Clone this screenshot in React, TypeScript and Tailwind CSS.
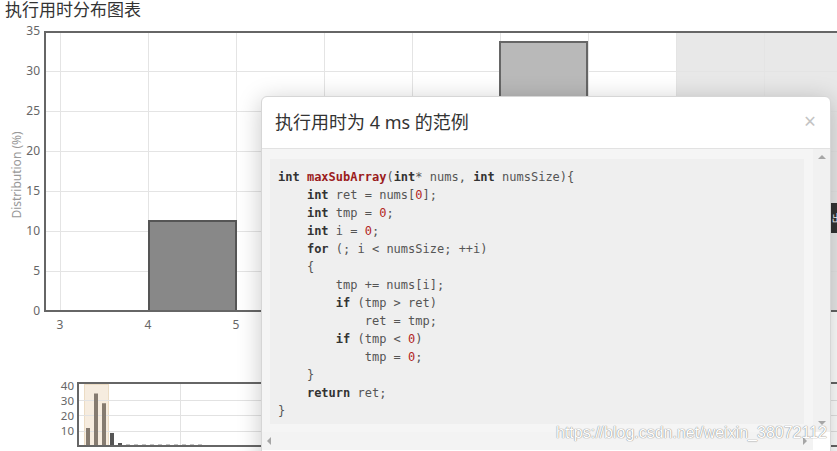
import React from "react";

// main chart geometry (page coords, svg is shifted up by the title height)
const yTicks = [0, 5, 10, 15, 20, 25, 30, 35];
const xGrid = [60, 148, 236, 324, 412, 500, 588, 676, 764];

const miniBars = [
  { x: 78, v: 0.6 },
  { x: 86, v: 12, sel: true },
  { x: 94, v: 35, sel: true },
  { x: 102, v: 28.5, sel: true },
  { x: 110, v: 8.7 },
  { x: 118, v: 2 },
  ...[126, 134, 142, 150, 158, 166, 174, 182, 190, 198].map((x) => ({ x, v: 0.9 })),
];

function K({ children }: { children: React.ReactNode }) {
  return <span className="font-bold text-[#333]">{children}</span>;
}

function N({ children }: { children: React.ReactNode }) {
  return <span className="text-[#b3261e]">{children}</span>;
}

function Chart() {
  return (
    <svg width="837" height="431" className="block" style={{ fontFamily: "'Noto Sans', 'Open Sans', sans-serif" }}>
      <g transform="translate(0,-20)">
        {/* hover band */}
        <rect x="676" y="33" width="161" height="277" fill="#e8e8e8" />

        {/* grid */}
        {yTicks.slice(1, -1).map((v) => (
          <line key={v} x1="46" x2="837" y1={311 - v * 8 + 0.5} y2={311 - v * 8 + 0.5} stroke="#e4e4e4" />
        ))}
        {xGrid.map((x) => (
          <line key={x} x1={x + 0.5} x2={x + 0.5} y1="33" y2="310" stroke="#e4e4e4" />
        ))}

        {/* bars */}
        <rect x="149" y="221" width="87" height="90" fill="#888" stroke="#555" strokeWidth="2" />
        <rect x="500" y="42" width="87" height="269" fill="#b9b9b9" stroke="#666" strokeWidth="2" />

        {/* axes */}
        <line x1="45" x2="45" y1="31" y2="312" stroke="#666" strokeWidth="2" />
        <line x1="44" x2="837" y1="32" y2="32" stroke="#666" strokeWidth="2" />
        <line x1="44" x2="837" y1="311" y2="311" stroke="#666" strokeWidth="2" />

        {yTicks.map((v) => (
          <text key={v} x="40" y={311 - v * 8 + 4} textAnchor="end" fontSize="12" fill="#666">
            {v}
          </text>
        ))}
        {[3, 4, 5].map((n, i) => (
          <text key={n} x={60 + i * 88} y="329" textAnchor="middle" fontSize="12" fill="#666">
            {n}
          </text>
        ))}
        <text x="21" y="175" transform="rotate(-90 21 175)" textAnchor="middle" fontSize="12" fill="#999">
          Distribution (%)
        </text>

        {/* tooltip fragment on the right edge */}
        <rect x="831" y="203" width="10" height="30" fill="#333" />
        <text x="832" y="222" fontSize="11" fill="#fff">出</text>

        {/* navigator */}
        <rect x="84.5" y="384.5" width="24" height="61" fill="#f6ecdf" stroke="#ecdcc4" />
        {[400, 415, 431].map((y) => (
          <line key={y} x1="79" x2="837" y1={y + 0.5} y2={y + 0.5} stroke="#e2e2e2" />
        ))}
        <line x1="180.5" x2="180.5" y1="384" y2="446" stroke="#e2e2e2" />
        {miniBars.map((b) => (
          <rect key={b.x} x={b.x} y={446 - b.v * 1.5} width="4" height={b.v * 1.5} fill={b.sel ? "#857b70" : "#555"} />
        ))}
        <line x1="78" x2="78" y1="382" y2="447" stroke="#666" strokeWidth="2" />
        <line x1="77" x2="837" y1="383" y2="383" stroke="#666" strokeWidth="2" />
        <line x1="77" x2="837" y1="446" y2="446" stroke="#666" strokeWidth="2" />
        {[40, 30, 20, 10].map((v) => (
          <text key={v} x="74" y={446 - v * 1.5 + 4} textAnchor="end" fontSize="11.5" fill="#666">
            {v}
          </text>
        ))}
      </g>
    </svg>
  );
}

function CodeModal() {
  return (
    <div className="absolute left-[261px] top-[96px] w-[570px] h-[420px] flex flex-col bg-white border border-[#d6d6d6] rounded-[6px] shadow-[0_4px_24px_rgba(0,0,0,0.22)]">
      <div className="h-[52px] flex items-center justify-between pl-[13px] pr-[14px] border-b border-[#e2e2e2] shrink-0">
        <span className="text-[18px] text-[#333]" style={{ fontFamily: "'Noto Sans', 'Noto Sans CJK SC', sans-serif" }}>
          执行用时为 4 ms 的范例
        </span>
        <span className="text-[21px] leading-none text-[#c4c4c4] -mt-[3px]">×</span>
      </div>

      <div className="grid grid-cols-[551px_17px] grid-rows-[283px_18px]">
        <div className="bg-[#f5f5f5] pt-[10px] pl-[8px] pr-[9px] pb-[8px]">
          <pre
            className="h-full bg-[#efefef] pl-[8px] pt-[9px] text-[12px] leading-[18px] text-[#555]"
            style={{ fontFamily: "'DejaVu Sans Mono', 'Liberation Mono', monospace" }}
          >
            <K>int</K> <span className="font-bold text-[#9b1c1c]">maxSubArray</span>(<K>int</K>* nums, <K>int</K> numsSize){"{"}
            {"\n    "}<K>int</K> ret = nums[<N>0</N>];
            {"\n    "}<K>int</K> tmp = <N>0</N>;
            {"\n    "}<K>int</K> i = <N>0</N>;
            {"\n    "}<K>for</K> (; i &lt; numsSize; ++i)
            {"\n    {"}
            {"\n        "}tmp += nums[i];
            {"\n        "}<K>if</K> (tmp &gt; ret)
            {"\n            "}ret = tmp;
            {"\n        "}<K>if</K> (tmp &lt; <N>0</N>)
            {"\n            "}tmp = <N>0</N>;
            {"\n    }"}
            {"\n    "}<K>return</K> ret;
            {"\n}"}
          </pre>
        </div>

        {/* vertical scrollbar */}
        <div className="bg-[#f1f1f1] flex flex-col items-center justify-between pt-[6px] pb-[7px]">
          <div className="w-0 h-0 border-x-[4px] border-x-transparent border-b-[4px] border-b-[#a6a6a6]" />
          <div className="w-0 h-0 border-x-[4px] border-x-transparent border-t-[4px] border-t-[#a6a6a6]" />
        </div>

        {/* horizontal scrollbar */}
        <div className="bg-[#f3f3f3] flex items-center justify-between pl-[5px] pr-[6px]">
          <div className="w-0 h-0 border-y-[4px] border-y-transparent border-r-[4px] border-r-[#a6a6a6]" />
          <div className="w-0 h-0 border-y-[4px] border-y-transparent border-l-[4px] border-l-[#a6a6a6]" />
        </div>
        <div className="bg-white" />
      </div>
    </div>
  );
}

export default function App() {
  return (
    <div className="relative w-[837px] h-[451px] overflow-hidden bg-white">
      <div
        className="h-[20px] pl-[5px] text-[17px] leading-[18px] text-[#333]"
        style={{ fontFamily: "'Noto Sans CJK SC', sans-serif" }}
      >
        执行用时分布图表
      </div>
      <Chart />
      <CodeModal />
      <div
        className="absolute left-[556px] top-[423px] text-[16px] leading-[20px] text-white [text-shadow:0_0_1px_#8a8a8a,0_0_1px_#8a8a8a]"
        style={{ fontFamily: "'Liberation Sans', Arial, sans-serif" }}
      >
        https://blog.csdn.net/weixin_38072112
      </div>
    </div>
  );
}
